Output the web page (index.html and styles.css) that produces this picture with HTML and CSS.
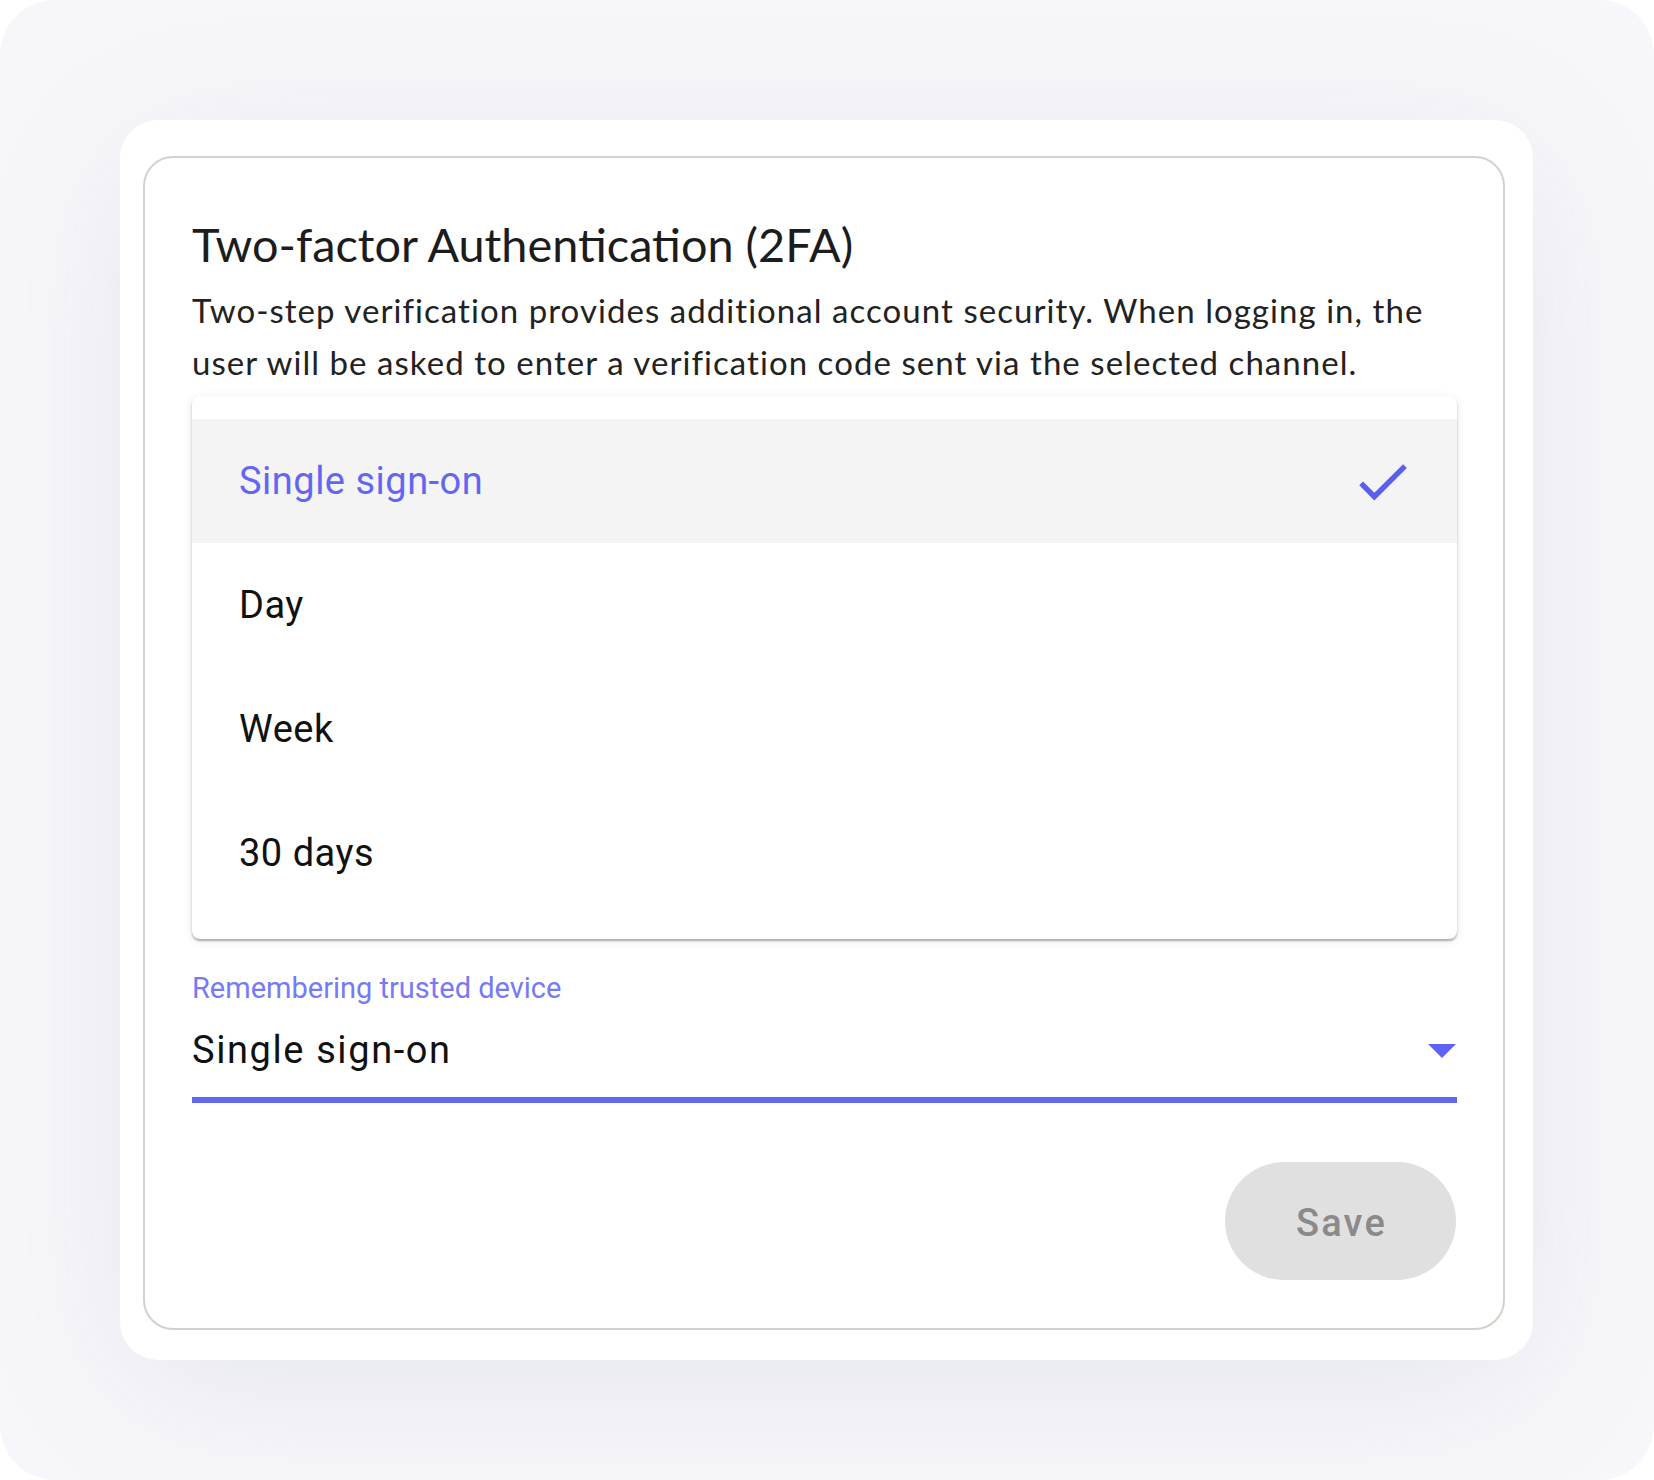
FILE: index.html
```html
<!DOCTYPE html>
<html lang="en">
<head>
<meta charset="utf-8">
<title>Two-factor Authentication</title>
<link rel="stylesheet" href="styles.css">
</head>
<body>
<div class="frame">
  <div class="card">
    <section class="panel">
      <h1 class="title">Two-factor Authentication (2FA)</h1>
      <p class="desc">Two-step verification provides additional account security. When logging in, the user will be asked to enter a verification code sent via the selected channel.</p>
      <ul class="menu">
        <li class="option selected"><span>Single sign-on</span>
          <svg class="check" viewBox="0 0 24 24" aria-hidden="true"><path d="M9 16.17L4.83 12l-1.42 1.41L9 19 21 7l-1.41-1.41z"/></svg>
        </li>
        <li class="option"><span>Day</span></li>
        <li class="option"><span>Week</span></li>
        <li class="option"><span>30 days</span></li>
      </ul>
      <div class="field">
        <label class="label">Remembering trusted device</label>
        <div class="select">
          <span class="value">Single sign-on</span>
          <span class="arrow"></span>
        </div>
      </div>
      <div class="actions">
        <button class="save" type="button">Save</button>
      </div>
    </section>
  </div>
</div>
</body>
</html>
```
FILE: styles.css
```css
* { box-sizing: border-box; }
html, body { margin: 0; padding: 0; background: #ffffff; }
body { width: 1654px; height: 1480px; overflow: hidden; }

.frame {
  width: 1654px;
  height: 1480px;
  border-radius: 55px;
  background: #f7f7fb;
  padding: 120px 121px 120px 120px;
  overflow: hidden;
}

.card {
  background: #ffffff;
  border-radius: 38px;
  height: 1240px;
  padding: 36px 28px 30px 23px;
  box-shadow: 0 30px 160px rgba(80, 80, 130, 0.10);
}

.panel {
  border: 2px solid #d2d2cb;
  border-radius: 30px;
  height: 1174px;
  padding: 58px 46px 0 47px;
}

.title {
  margin: 0;
  font-family: Lato, "Liberation Sans", sans-serif;
  font-weight: 400;
  font-size: 46.8px;
  line-height: 56px;
  color: #1c1c1c;
}

.desc {
  margin: 12px 0 0;
  font-family: Lato, "Liberation Sans", sans-serif;
  font-size: 33px;
  letter-spacing: 1.05px;
  line-height: 52px;
  color: #222222;
}

.menu {
  list-style: none;
  margin: 8px 0 0;
  padding: 23px 0 24px;
  background: #ffffff;
  border-radius: 8px;
  box-shadow: 0 2px 2px rgba(0,0,0,0.28), 0 2px 10px rgba(0,0,0,0.10);
}

.option {
  height: 124px;
  display: flex;
  align-items: center;
  justify-content: space-between;
  padding: 0 42px 0 47px;
  font-family: Roboto, "Liberation Sans", sans-serif;
  font-size: 38px;
  letter-spacing: 0.5px;
  color: #111111;
}

.option.selected {
  background: #f4f4f4;
  color: #6366f1;
}

.check {
  width: 65px;
  height: 65px;
  fill: #5b5ef2;
}

.field { margin-top: 32px; }

.label {
  display: block;
  font-family: Roboto, "Liberation Sans", sans-serif;
  font-size: 29px;
  line-height: 34px;
  color: #767af6;
}

.select {
  margin-top: 23px;
  display: flex;
  align-items: center;
  justify-content: space-between;
  padding-bottom: 24px;
  border-bottom: 6px solid #6366f1;
}

.value {
  font-family: Roboto, "Liberation Sans", sans-serif;
  font-size: 38px;
  letter-spacing: 1.6px;
  line-height: 45px;
  color: #111111;
}

.arrow {
  width: 0;
  height: 0;
  border-left: 14px solid transparent;
  border-right: 14px solid transparent;
  border-top: 14px solid #5f63f5;
  margin-right: 1px;
}

.actions {
  display: flex;
  justify-content: flex-end;
  margin-top: 59px;
  padding-right: 1px;
}

.save {
  width: 231px;
  height: 118px;
  border: none;
  border-radius: 59px;
  background: #e0e0e0;
  font-family: Roboto, "Liberation Sans", sans-serif;
  font-weight: 500;
  font-size: 38px;
  letter-spacing: 2.2px;
  color: #8a8a8a;
  padding: 4px 0 0 2px;
}
```
